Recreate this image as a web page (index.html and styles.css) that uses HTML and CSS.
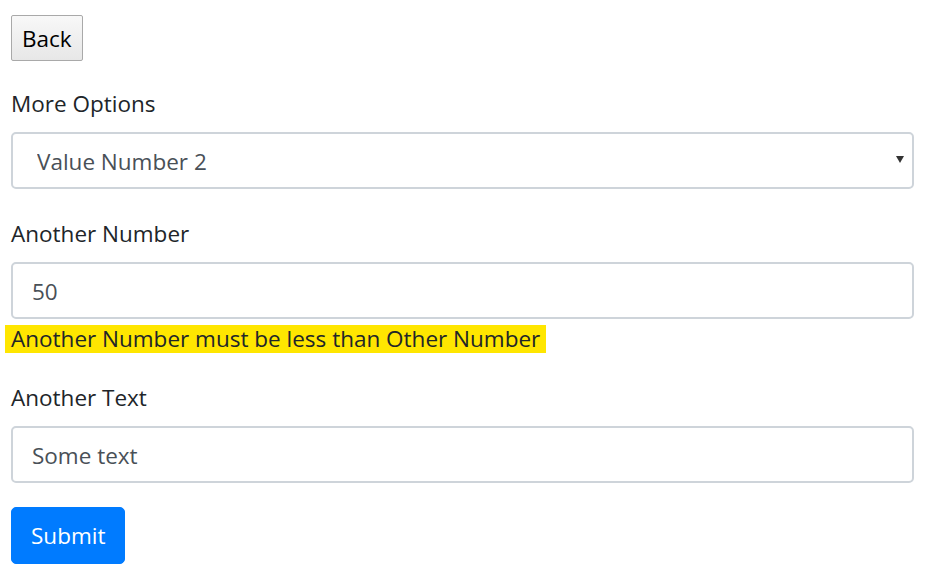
FILE: index.html
```html
<!DOCTYPE html>
<html lang="en">
<head>
  <meta charset="UTF-8" />
  <meta name="viewport" content="width=device-width, initial-scale=1.0" />
  <title>Form</title>
  <link rel="stylesheet" href="styles.css">
</head>
<body>
  <div class="page">
    <button class="back-btn" type="button">Back</button>

    <form class="form">
      <div class="form-group">
        <label for="options">More Options</label>
        <div class="select-wrap">
          <select id="options" class="form-control select">
            <option>Value Number 1</option>
            <option selected>Value Number 2</option>
            <option>Value Number 3</option>
          </select>
        </div>
      </div>

      <div class="form-group">
        <label for="another-number">Another Number</label>
        <input id="another-number" class="form-control" type="text" value="50" />
        <div class="error"><span>Another Number must be less than Other Number</span></div>
      </div>

      <div class="form-group">
        <label for="another-text">Another Text</label>
        <input id="another-text" class="form-control" type="text" value="Some text" />
      </div>

      <button class="btn-primary" type="submit">Submit</button>
    </form>
  </div>
</body>
</html>
```

FILE: styles.css
```css
body {
  margin: 0;
  font-family: 'Open Sans', sans-serif;
  font-size: 22.5px;
  line-height: 30px;
  color: #212529;
  background: #fff;
}

.page {
  padding: 15px 14px 0 11px;
}

.back-btn {
  display: block;
  font-family: inherit;
  font-size: 22.5px;
  color: #000;
  height: 46px;
  padding: 0 10px 0 10px;
  background: linear-gradient(to bottom, #f8f8f8, #e7e7e7);
  border: 1px solid #a9a9a9;
  border-radius: 2px;
}

.form {
  margin-top: 28px;
}

label {
  display: block;
  margin-bottom: 13px;
}

.form-group {
  margin-bottom: 30px;
}

.form-control {
  display: block;
  box-sizing: border-box;
  width: 100%;
  height: 57px;
  padding: 2px 19px 0;
  font-family: inherit;
  font-size: 22.5px;
  color: #495057;
  background: #fff;
  border: 2px solid #ced4da;
  border-radius: 5px;
  outline: none;
}

.select-wrap {
  position: relative;
}

.select {
  appearance: none;
  -webkit-appearance: none;
  padding-left: 24px;
}

.select-wrap::after {
  content: "";
  position: absolute;
  right: 10px;
  top: 24px;
  border-left: 4.5px solid transparent;
  border-right: 4.5px solid transparent;
  border-top: 7px solid #333;
}

.error {
  margin: 6px 0 0 -6px;
  line-height: 28px;
}

.error span {
  display: inline-block;
  background: #ffe600;
  padding: 0 6px 0 6px;
}

.btn-primary {
  display: block;
  margin-top: -6px;
  height: 57px;
  padding: 0 19px;
  font-family: inherit;
  font-size: 22.5px;
  color: #fff;
  background: #007bff;
  border: 1px solid #007bff;
  border-radius: 5px;
}
```
